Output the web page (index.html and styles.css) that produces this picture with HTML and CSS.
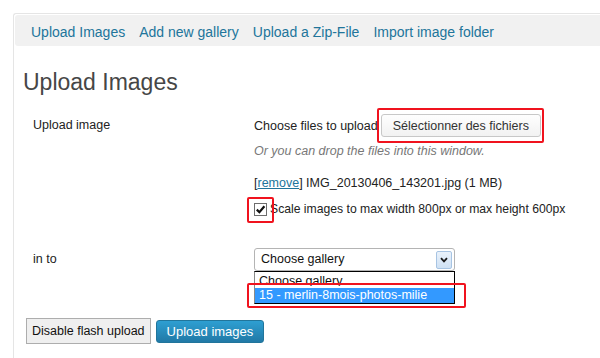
FILE: index.html
```html
<!DOCTYPE html>
<html lang="en">
<head>
  <meta charset="UTF-8">
  <title>Upload Images</title>
  <link rel="stylesheet" href="styles.css">
</head>
<body>
  <div class="wrap">
    <div class="nav">
      <a href="#">Upload Images</a>
      <a href="#">Add new gallery</a>
      <a href="#">Upload a Zip-File</a>
      <a href="#">Import image folder</a>
    </div>

    <h2>Upload Images</h2>

    <!-- upload row -->
    <div class="row">
      <div class="row-label">Upload image</div>
      <div class="row-value">
        <div class="file-line">
          <span>Choose files to upload</span>
          <span class="btn">Sélectionner des fichiers</span>
        </div>
        <p class="hint">Or you can drop the files into this window.</p>
        <p class="file-item">[<a href="#">remove</a>] IMG_20130406_143201.jpg (1 MB)</p>
        <div class="check-line">
          <span class="checkbox">
            <svg width="11" height="11" viewBox="0 0 11 11"><path d="M1.8 5.6 L4.4 8.2 L9.4 2.2" fill="none" stroke="#111" stroke-width="2.2"/></svg>
          </span>
          <span>Scale images to max width 800px or max height 600px</span>
        </div>
      </div>
    </div>

    <!-- gallery row -->
    <div class="row">
      <div class="row-label">in to</div>
      <div class="row-value">
        <div class="select-wrap">
          <div class="select">
            <span>Choose gallery</span>
            <span class="select-arrow">
              <svg width="8" height="6" viewBox="0 0 8 6"><path d="M1 1.2 L4 4.4 L7 1.2" fill="none" stroke="#1a1a1a" stroke-width="1.8"/></svg>
            </span>
          </div>
          <div class="select-list">
            <div class="opt opt-cut">Choose gallery</div>
            <div class="opt opt-active">15 - merlin-8mois-photos-milie</div>
          </div>
        </div>
      </div>
    </div>

    <div class="actions">
      <span class="btn-flash">Disable flash upload</span>
      <span class="btn-primary">Upload images</span>
    </div>
  </div>

  <!-- annotation boxes -->
  <div class="mark mark-button"></div>
  <div class="mark mark-check"></div>
  <div class="mark mark-gallery"></div>
</body>
</html>
```

FILE: styles.css
```css
body {
  font-family: "Liberation Sans", Arial, sans-serif;
  font-size: 12.5px;
  color: #333;
  margin: 0;
  background: #fff;
  position: relative;
}
a {
  color: #21759b;
  text-decoration: none;
}
.wrap {
  margin: 13px 0 0 13px;
  border-top: 1px solid #e5e5e5;
  border-left: 1px solid #e5e5e5;
  border-top-left-radius: 3px;
  padding: 1px 0 0 1px;
  height: 345px;
  box-sizing: border-box;
}
.nav {
  display: flex;
  gap: 14px;
  height: 31px;
  box-sizing: border-box;
  padding: 3px 0 0 16px;
  line-height: 28px;
  font-size: 14px;
  background: #f1f1f1;
  border-radius: 3px 0 0 3px;
}
h2 {
  margin: 22px 0 0 8px;
  font-size: 23px;
  font-weight: normal;
  line-height: 28px;
  color: #464646;
}
.row {
  display: flex;
  padding-bottom: 12px;
}
.row-label {
  width: 221px;
  padding: 20px 0 0 18px;
  line-height: 18px;
  color: #222;
}
.row-value {
  padding-top: 18px;
  line-height: 18px;
}
.row-value p {
  margin: 0;
}
.file-line {
  display: flex;
  align-items: baseline;
  color: #222;
}
.btn {
  margin-left: 3px;
  padding: 4px 11px 2px;
  line-height: 15px;
  border: 1px solid #c8c8c8;
  border-radius: 3px;
  background: linear-gradient(#fefefe, #f2f2f2);
  color: #333;
}
.hint {
  margin-top: 5px !important;
  font-style: italic;
  color: #777;
}
.file-item {
  margin-top: 14px !important;
  color: #222;
}
.file-item a {
  text-decoration: underline;
}
.check-line {
  display: flex;
  align-items: center;
  margin-top: 8px;
  font-size: 12.2px;
  color: #222;
}
.checkbox {
  width: 13px;
  height: 13px;
  box-sizing: border-box;
  border: 1px solid #6d6d6d;
  background: #fff;
  margin-right: 3px;
  display: flex;
  align-items: center;
  justify-content: center;
}
.select-wrap {
  position: relative;
  width: 201px;
}
.select {
  display: flex;
  align-items: center;
  justify-content: space-between;
  height: 23px;
  box-sizing: border-box;
  padding: 0 2px 0 6px;
  line-height: 15px;
  border: 1px solid #b4b4b4;
  border-radius: 3px;
  color: #111;
}
.select-arrow {
  width: 16px;
  height: 18px;
  box-sizing: border-box;
  border: 1px solid #a7c4e3;
  border-radius: 2px;
  background: linear-gradient(#eaf2fb, #cfe1f4);
  display: flex;
  align-items: center;
  justify-content: center;
}
.select-list {
  position: absolute;
  top: 100%;
  left: 0;
  right: 0;
  border: 1px solid #000;
  border-left-color: #8a8a8a;
  background: #fff;
  color: #111;
}
.opt {
  padding-left: 4px;
  white-space: nowrap;
}
.opt-cut {
  height: 14px;
  line-height: 18px;
  overflow: hidden;
  margin-bottom: 2px;
}
.opt-active {
  line-height: 15px;
  background: #3399ff;
  color: #fff;
}
.actions {
  display: flex;
  align-items: center;
  gap: 5px;
  margin: 35px 0 0 11px;
}
.btn-flash {
  padding: 0 5px;
  line-height: 24px;
  border: 1px solid #adadad;
  background: #efefef;
  color: #111;
}
.btn-primary {
  padding: 0 10px;
  line-height: 21px;
  font-size: 13px;
  border: 1px solid #21759b;
  border-radius: 3px;
  background: linear-gradient(#2e9fd2, #2179a6);
  color: #fff;
}
.mark {
  position: absolute;
  border: 2px solid #f0131e;
  border-radius: 2px;
  box-sizing: border-box;
}
.mark-button {
  left: 377px;
  top: 108px;
  width: 167px;
  height: 35px;
}
.mark-check {
  left: 247px;
  top: 197px;
  width: 27px;
  height: 26px;
}
.mark-gallery {
  left: 247px;
  top: 283px;
  width: 219px;
  height: 25px;
}
```
